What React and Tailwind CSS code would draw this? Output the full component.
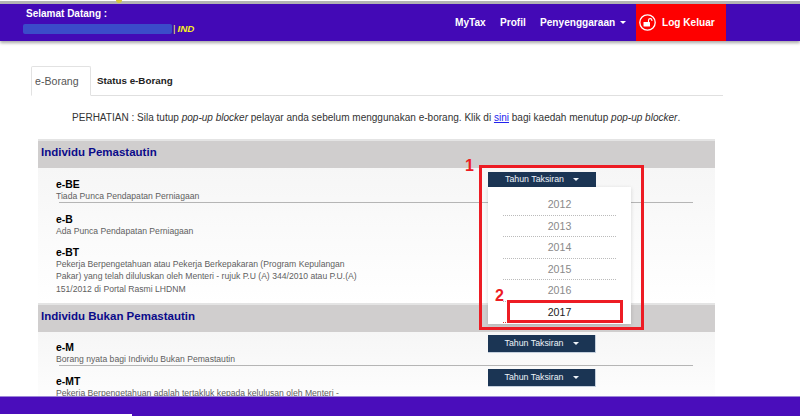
const FONT = { fontFamily: '"Liberation Sans", Arial, sans-serif' };

function Caret({ className = "" }) {
  return <span className={`inline-block w-0 h-0 border-l-[3px] border-r-[3px] border-t-[3px] border-l-transparent border-r-transparent border-t-current ${className}`} />;
}

function TaxButton({ top }) {
  return (
    <button className={`ml-auto mr-[119px] shrink-0 w-[108px] h-[18px] bg-[#1b3554] text-[#eef3f8] text-[8.8px] flex items-center justify-center gap-[9px] border-r border-b border-[#c4cfdc] ${top}`}>
      Tahun Taksiran <Caret />
    </button>
  );
}

function Row({ title, lines, height, pt, btnTop, rule = true, button = true }) {
  return (
    <div className={`flex flex-col ${height}`}>
      <div className={`flex flex-1 items-start`}>
        <div className={`ml-[18px] w-[310px] ${pt}`}>
          <div className="text-[10.4px] leading-[11px] font-bold text-black">{title}</div>
          <div className="text-[8.62px] leading-[12.3px] text-[#5f5f5f]">
            {lines.map((l) => <div key={l}>{l}</div>)}
          </div>
        </div>
        {button && <TaxButton top={btnTop} />}
      </div>
      {rule && <div className="ml-[21px] mr-[22px] h-px bg-[#b5b5b5]" />}
    </div>
  );
}

function SectionHead({ children, height }) {
  return (
    <div className={`border-t-[2px] border-[#e4e4e4] bg-[#d0cece] ${height} pl-[3px] pb-[4px] flex items-center text-[11.5px] font-bold text-[#0b0b8a]`}>
      {children}
    </div>
  );
}

const YEARS = ["2012", "2013", "2014", "2015", "2016"];

export default function App() {
  return (
    <div style={FONT} className="relative h-[416px] w-[800px] overflow-hidden bg-white flex flex-col">
      {/* Header */}
      <header className="shrink-0 relative z-10">
        <div className="h-[1px] bg-white" />
        <div className="h-[3px] bg-[#b5b5b5]" />
        <div className="absolute left-[116px] top-0 w-[6px] h-[3px] bg-[#d9c93a] rounded-b-sm" />
        <div className="h-[37px] bg-[#4309b6] flex shadow-[0_2px_3px_rgba(0,0,0,0.35)]">
          <div className="pl-[26px] pt-[4px] w-[440px]">
            <div className="text-[10px] leading-[12px] font-bold text-white">Selamat Datang :</div>
            <div className="flex items-center h-[14px] mt-[2px] -ml-[3px]">
              <div className="w-[149px] h-[10px] bg-[#3b4bc9] rounded-[2px] blur-[0.5px]" />
              <span className="text-[#f2ef5a] text-[9.8px] ml-[1px]">|</span>
              <span className="text-[#f5f01e] text-[9.8px] font-bold italic ml-[2px]">IND</span>
            </div>
          </div>
          <nav className="flex items-center text-white text-[10.1px] font-bold ml-[15px]">
            <span className="w-[45px]">MyTax</span>
            <span className="w-[40px]">Profil</span>
            <span className="flex items-center gap-[5px] w-[96px]">Penyenggaraan <Caret /></span>
          </nav>
          <div className="w-[90px] bg-[#fe0000] flex items-center text-white text-[10.1px] font-bold">
            <svg className="ml-[3px] mr-[6px]" width="17" height="17" viewBox="0 0 17 17" fill="none">
              <circle cx="8.5" cy="8.5" r="7.7" stroke="white" strokeWidth="1.3" />
              <rect x="4.5" y="8" width="6.5" height="4.5" rx="0.5" fill="white" />
              <path d="M9.5 8V6.3a1.7 1.7 0 0 1 3.4 0V7" stroke="white" strokeWidth="1.1" />
            </svg>
            Log Keluar
          </div>
        </div>
      </header>

      {/* Main */}
      <main className="flex-1 min-h-0 overflow-hidden">
        {/* Tabs */}
        <div className="mt-[25px] ml-[31px] w-[692px] h-[30px] border-b border-[#e0e0e0] flex">
          <div className="h-[30px] w-[60px] border border-b-white border-[#e2e2e2] rounded-t-[2px] pl-[3px] pt-[2px] flex items-center text-[10.6px] text-[#555555]">e-Borang</div>
          <div className="pl-[6px] pt-[2px] flex items-center text-[9.8px] font-bold text-[#222222]">Status e-Borang</div>
        </div>
        {/* Notice */}
        <p className="ml-[72px] mt-[15px] h-[14px] leading-[14px] text-[10.04px] text-[#333333] whitespace-nowrap">
          PERHATIAN : Sila tutup <i>pop-up blocker</i> pelayar anda sebelum menggunakan e-borang. Klik di <a className="text-[#2222ee] underline">sini</a> bagi kaedah menutup <i>pop-up blocker</i>.
        </p>
        {/* Sections */}
        <div className="ml-[38px] mt-[14px] w-[677px]">
          <SectionHead height="h-[29px]">Individu Pemastautin</SectionHead>
          <div className="bg-gradient-to-b from-[#f6f6f6] to-white">
            <Row title="e-BE" lines={["Tiada Punca Pendapatan Perniagaan"]} height="h-[35px]" pt="pt-[11px]" button={false} />
            <Row title="e-B" lines={["Ada Punca Pendapatan Perniagaan"]} height="h-[34px]" pt="pt-[11px]" button={false} />
            <Row
              title="e-BT"
              lines={[
                "Pekerja Berpengetahuan atau Pekerja Berkepakaran (Program Kepulangan",
                "Pakar) yang telah diluluskan oleh Menteri - rujuk P.U (A) 344/2010 atau P.U.(A)",
                "151/2012 di Portal Rasmi LHDNM",
              ]}
              height="h-[66px]"
              pt="pt-[10px]"
              rule={false}
              button={false}
            />
          </div>
          <SectionHead height="h-[29px]">Individu Bukan Pemastautin</SectionHead>
          <div className="bg-gradient-to-b from-[#f6f6f6] to-white">
            <Row title="e-M" lines={["Borang nyata bagi Individu Bukan Pemastautin"]} height="h-[34px]" pt="pt-[10px]" btnTop="mt-[3px]" />
            <Row title="e-MT" lines={["Pekerja Berpengetahuan adalah tertakluk kepada kelulusan oleh Menteri -"]} height="h-[50px]" pt="pt-[10px]" btnTop="mt-[3px]" rule={false} />
          </div>
        </div>
      </main>

      {/* Footer */}
      <footer className="absolute left-0 right-0 bottom-0 h-[20px] bg-[#4a0dbb] border-t border-[#9d86d8] z-10">
        <div className="absolute left-0 bottom-0 w-[132px] h-[2px] bg-white" />
      </footer>

      {/* Open dropdown */}
      <div className="absolute left-[488px] top-[172px] z-20 w-[143px]">
        <button className="w-[108px] h-[15px] bg-[#1b3554] text-[#eef3f8] text-[8.8px] flex items-center justify-center gap-[9px]">
          Tahun Taksiran <Caret />
        </button>
        <div className="h-[137px] bg-white shadow-[0_1px_4px_rgba(0,0,0,0.15)] pt-[7px] px-[15px]">
          {YEARS.map((y) => (
            <div key={y} className="h-[21.5px] border-b border-dotted border-[#bbbbbb] text-center text-[10.6px] leading-[20px] text-[#8a8a8a]">{y}</div>
          ))}
          <div className="h-[21.5px] border-b border-dotted border-[#e03030] text-center text-[10.6px] leading-[20px] text-[#222222]">2017</div>
        </div>
      </div>

      {/* Annotations */}
      <div className="absolute left-[479px] top-[165px] w-[165px] h-[165px] border-[3px] border-[#ed1c24] z-30" />
      <div className="absolute left-[507px] top-[300px] w-[116px] h-[23px] border-[3px] border-[#ed1c24] z-30" />
      <div className="absolute left-[465px] top-[157px] text-[#ed1c24] text-[16px] leading-[18px] font-bold z-30">1</div>
      <div className="absolute left-[495px] top-[287px] text-[#ed1c24] text-[16px] leading-[18px] font-bold z-30">2</div>
    </div>
  );
}
